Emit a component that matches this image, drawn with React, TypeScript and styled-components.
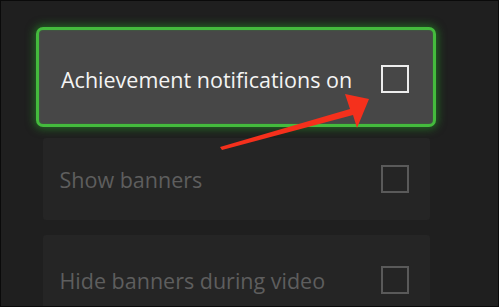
import React from 'react';
import styled, { createGlobalStyle } from 'styled-components';

const GlobalStyle = createGlobalStyle`
  html, body {
    margin: 0;
    padding: 0;
    background: #1f1f1f;
  }
`;

const Screen = styled.div`
  position: relative;
  box-sizing: border-box;
  width: 499px;
  height: 307px;
  overflow: hidden;
  background: #1f1f1f;
  border: 1px solid #0a0a0a;
  font-family: 'Open Sans', 'Noto Sans', sans-serif;
`;

const List = styled.div`
  display: flex;
  flex-direction: column;
  align-items: center;
  width: 400px;
  margin-left: 35px;
  padding-top: 26px;
`;

const Row = styled.div<IRow>`
  box-sizing: border-box;
  display: flex;
  align-items: center;
  justify-content: space-between;
  flex-shrink: 0;
  width: ${p => (p.focused ? '400px' : '387px')};
  height: ${p => (p.focused ? '100px' : `${p.height || 82}px`)};
  margin-bottom: ${p => (p.focused ? '11px' : '15px')};
  padding: ${p => (p.focused ? '4px 24px 0 22px' : '0 21px 0 17px')};
  border-radius: ${p => (p.focused ? '7px' : '3px')};
  background: ${p => (p.focused ? '#474747' : '#252525')};
  border: ${p => (p.focused ? '3px solid #44bb3d' : 'none')};
  box-shadow: ${p =>
    p.focused ? '0 0 8px 2px rgba(40, 170, 40, 0.5), inset 0 0 2px rgba(40, 170, 40, 0.5)' : 'none'};
`;

const Label = styled.span<IRow>`
  font-size: 21.5px;
  color: ${p => (p.focused ? '#f4f4f4' : '#5e5e5e')};
`;

const Box = styled.span<IRow>`
  box-sizing: border-box;
  width: 28px;
  height: 28px;
  border: 2px solid ${p => (p.focused ? '#eeeeee' : '#5a5a5a')};
`;

const Arrow = styled.svg`
  position: absolute;
  left: 0;
  top: 0;
`;

const items = [
  { label: 'Achievement notifications on', focused: true, height: 100 },
  { label: 'Show banners', focused: false, height: 82 },
  { label: 'Hide banners during video', focused: false, height: 90 },
];

const App = () => {
  return (
    <>
      <GlobalStyle />
      <Screen>
        <List>
          {items.map((item, index) => (
            <Row key={index} focused={item.focused} height={item.height}>
              <Label focused={item.focused}>{item.label}</Label>
              <Box focused={item.focused} />
            </Row>
          ))}
        </List>
        <Arrow width="499" height="307" viewBox="0 0 499 307">
          <polygon points="219,146 349,108 344,93 368,98 356,127 352,114 221,149" fill="#f5301c" />
        </Arrow>
      </Screen>
    </>
  );
};

interface IRow {
  focused?: boolean;
  height?: number;
}

export default App;
